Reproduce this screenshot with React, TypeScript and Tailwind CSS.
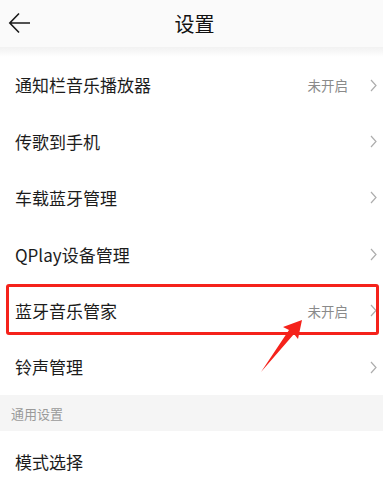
const rows = [
  { label: '通知栏音乐播放器', value: '未开启' },
  { label: '传歌到手机' },
  { label: '车载蓝牙管理' },
  { label: 'QPlay设备管理' },
  { label: '蓝牙音乐管家', value: '未开启', marked: true },
  { label: '铃声管理' },
];

function Row({ label, value, marked }: { label: string; value?: string; marked?: boolean }) {
  return (
    <div className="relative flex h-[56.4px] items-center pl-[15px] pr-[6px]">
      <span className="flex-1 text-[17px] text-[#1c1c1c]">{label}</span>
      {value && <span className="mr-[22px] text-[13.5px] text-[#8a8a8a]">{value}</span>}
      <svg width="7" height="13" viewBox="0 0 7 13">
        <path d="M1 1l5 5.5L1 12" fill="none" stroke="#adadad" strokeWidth="1.2" />
      </svg>
      {marked && (
        <div className="absolute left-[6px] right-[4px] top-[1px] h-[51px] rounded-[3px] border-[3px] border-[#f5221b]" />
      )}
    </div>
  );
}

export default function App() {
  return (
    <div
      className="relative h-[483px] w-[383px] overflow-hidden bg-white"
      style={{ fontFamily: '"Noto Sans CJK SC", "Noto Sans", sans-serif' }}
    >
      <div className="relative flex h-[47px] items-center justify-center bg-[#fafafa]">
        <svg className="absolute left-[8px] top-[12px]" width="24" height="22" viewBox="0 0 24 22">
          <path d="M22 11H2M11 1.5L1.8 11L11 20.5" fill="none" stroke="#1a1a1a" strokeWidth="1.6" />
        </svg>
        <span className="pl-[6px] text-[20px] text-[#111]">设置</span>
      </div>
      <div className="h-[10px] bg-gradient-to-b from-[#f1f1f1] to-white" />

      {rows.map(r => (
        <Row key={r.label} {...r} />
      ))}

      <div className="flex h-[36px] items-center bg-[#f5f5f5] pl-[11px] text-[13px] text-[#9a9a9a]">通用设置</div>

      <div className="flex h-[60px] items-center pl-[15px]">
        <span className="text-[17px] text-[#1c1c1c]">模式选择</span>
      </div>

      {/* annotation arrow */}
      <svg className="absolute left-0 top-0" width="383" height="483" viewBox="0 0 383 483">
        <polygon
          points="302,320 283,327 289,330 261,372 294,334 298,339"
          fill="#f5221b"
        />
      </svg>
    </div>
  );
}
